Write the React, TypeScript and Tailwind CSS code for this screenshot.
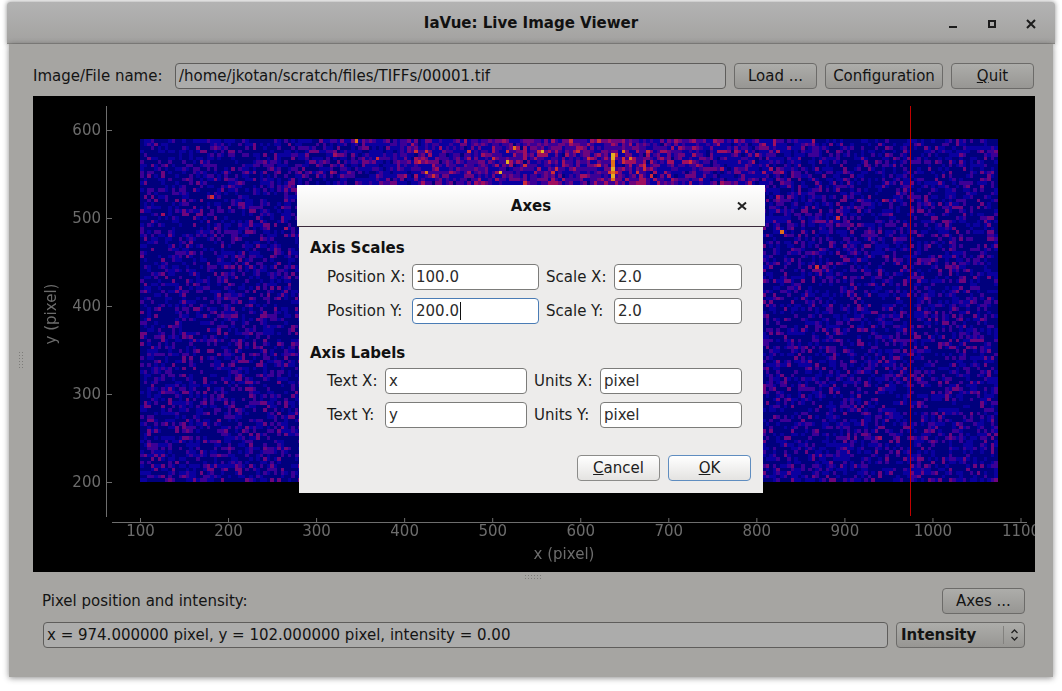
import { useEffect, useRef, type ReactNode } from 'react'

const PALETTE: [number, number, number][] = [
  [0, 0, 80],
  [0, 0, 125],
  [10, 0, 160],
  [60, 0, 150],
  [110, 5, 125],
  [160, 15, 95],
  [205, 45, 55],
  [225, 110, 25],
  [225, 175, 35],
]

const seeded = (seed: number) => () => {
  seed = (seed + 0x6d2b79f5) | 0
  let t = Math.imul(seed ^ (seed >>> 15), 1 | seed)
  t = (t + Math.imul(t ^ (t >>> 7), 61 | t)) ^ t
  return ((t ^ (t >>> 14)) >>> 0) / 4294967296
}

const Heatmap = () => {
  const ref = useRef<HTMLCanvasElement>(null)

  useEffect(() => {
    const ctx = ref.current?.getContext('2d')
    if (!ctx) return
    const rand = seeded(7)
    const cols = 244
    const rows = 98
    for (let y = 0; y < rows; y++) {
      for (let x = 0; x < cols; x++) {
        const bump = Math.exp(-(((x - 122) / 55) ** 2) - ((y / 32) ** 2))
        const r = rand()
        let v = 0.9 + 3.2 * r ** 2.6 + 2.4 * bump * (0.2 + rand())
        if (rand() < 0.003) v += 1.5
        if (rand() < 0.015 * bump) v += 2.5
        if (x === 134 && y >= 4 && y <= 11) v += 3.5 + rand() * 2
        const c = PALETTE[Math.max(0, Math.min(PALETTE.length - 1, Math.round(v)))]
        ctx.fillStyle = `rgb(${c[0]},${c[1]},${c[2]})`
        ctx.fillRect(x, y, 1, 1)
      }
    }
  }, [])

  return (
    <canvas
      ref={ref}
      width={244}
      height={98}
      className="absolute left-[107px] top-[43px] h-[343px] w-[858px] [image-rendering:pixelated]"
    />
  )
}

const PlotAxes = () => {
  const xTicks = [100, 200, 300, 400, 500, 600, 700, 800, 900, 1000, 1100]
  const yTicks = [600, 500, 400, 300, 200]
  const tx = (v: number) => 107.5 + (v - 100) * 0.8805
  const ty = (v: number) => 386 - (v - 200) * 0.88
  return (
    <svg
      viewBox="0 0 1002 476"
      className="absolute inset-0 h-full w-full font-['DejaVu_Sans',sans-serif] text-[15px]"
    >
      <line x1="73.5" y1="10" x2="73.5" y2="421" stroke="#6e6e6e" />
      <line x1="79" y1="426.5" x2="994" y2="426.5" stroke="#6e6e6e" />
      {yTicks.map((v) => (
        <g key={v}>
          <line x1="73" y1={ty(v) + 0.5} x2="79" y2={ty(v) + 0.5} stroke="#6e6e6e" />
          <text x="68" y={ty(v) + 4.5} textAnchor="end" fill="#6c6c6c">
            {v}
          </text>
        </g>
      ))}
      {xTicks.map((v) => (
        <g key={v}>
          <line x1={tx(v)} y1="422" x2={tx(v)} y2="427" stroke="#6e6e6e" />
          <text x={tx(v)} y="440" textAnchor="middle" fill="#6c6c6c">
            {v}
          </text>
        </g>
      ))}
      <text x="531" y="463" textAnchor="middle" fill="#6c6c6c">
        x (pixel)
      </text>
      <text
        transform="translate(23 218) rotate(-90)"
        textAnchor="middle"
        fill="#6c6c6c"
      >
        y (pixel)
      </text>
      <line x1="877.5" y1="10" x2="877.5" y2="420" stroke="#c00000" />
    </svg>
  )
}

const Grip = ({ vertical }: { vertical?: boolean }) => (
  <svg
    width={vertical ? 5 : 18}
    height={vertical ? 17 : 4}
    className="fill-[#7d7c79]"
  >
    {Array.from({ length: 6 }).flatMap((_, i) =>
      [0, 1].map((j) => (
        <rect
          key={`${i}-${j}`}
          x={vertical ? j * 3 : i * 3}
          y={vertical ? i * 3 : j * 3}
          width="1"
          height="1"
        />
      )),
    )}
  </svg>
)

const MainButton = ({ children, className }: { children: ReactNode; className: string }) => (
  <button className={`flex h-[26px] shrink-0 items-center justify-center rounded-[4px] border border-[#6c6b69] bg-gradient-to-b from-[#adadaa] to-[#979693] text-[#141414] ${className}`}>
    {children}
  </button>
)

const MainField = ({ children, className }: { children: ReactNode; className: string }) => (
  <div className={`flex h-[26px] items-center rounded-[4px] border border-[#5e5d5b] bg-[#acacab] pl-[3px] text-[#141414] ${className}`}>
    {children}
  </div>
)

const Field = ({ value, width, focused }: { value: string; width: string; focused?: boolean }) => (
  <div
    className={`flex h-[26px] shrink-0 items-center rounded-[4px] border bg-white pl-[3px] text-[#2b2b2b] ${width} ${
      focused ? 'border-[#4a7cb5]' : 'border-[#7c7c7a]'
    }`}
  >
    {value}
    {focused && <span className="ml-px h-[18px] w-px bg-[#111]" />}
  </div>
)

const FieldRow = ({
  labelA,
  labelB,
  a,
  b,
  wLabelA,
  wLabelB,
  wA,
  wB,
  focused,
}: {
  labelA: string
  labelB: string
  a: string
  b: string
  wLabelA: string
  wLabelB: string
  wA: string
  wB: string
  focused?: boolean
}) => (
  <div className="flex items-center gap-[7px]">
    <div className="flex items-center">
      <span className={`shrink-0 ${wLabelA}`}>{labelA}</span>
      <Field value={a} width={wA} focused={focused} />
    </div>
    <div className="flex items-center">
      <span className={`shrink-0 ${wLabelB}`}>{labelB}</span>
      <Field value={b} width={wB} />
    </div>
  </div>
)

const AxesDialog = () => (
  <div className="absolute left-[297px] top-[185px] w-[468px] text-[#1c1c1c]">
    <div className="relative flex h-[42px] items-center justify-center border-b border-[#3a2a3a] bg-gradient-to-b from-white to-[#ebeae8] pt-px font-bold text-[#111]">
      Axes
      <svg width="10" height="10" viewBox="0 0 10 10" className="absolute right-[18px] top-[16px] stroke-[#222] stroke-2">
        <path d="M1 1.5l8 7M9 1.5l-8 7" />
      </svg>
    </div>
    <div className="mx-[2px] flex h-[266px] flex-col bg-[#edeceb] pl-[11px] pt-[12px]">
      <h3 className="h-[18px] font-bold leading-[18px] text-[#111]">Axis Scales</h3>
      <div className="mt-[7px] flex flex-col gap-[8px] pl-[17px]">
        <FieldRow labelA="Position X:" labelB="Scale X:" a="100.0" b="2.0" wLabelA="w-[85px]" wLabelB="w-[68px]" wA="w-[127px]" wB="w-[128px]" />
        <FieldRow labelA="Position Y:" labelB="Scale Y:" a="200.0" b="2.0" wLabelA="w-[85px]" wLabelB="w-[68px]" wA="w-[127px]" wB="w-[128px]" focused />
      </div>
      <h3 className="mt-[20px] h-[18px] font-bold leading-[18px] text-[#111]">Axis Labels</h3>
      <div className="mt-[6px] flex flex-col gap-[8px] pl-[17px]">
        <FieldRow labelA="Text X:" labelB="Units X:" a="x" b="pixel" wLabelA="w-[58px]" wLabelB="w-[66px]" wA="w-[142px]" wB="w-[142px]" />
        <FieldRow labelA="Text Y:" labelB="Units Y:" a="y" b="pixel" wLabelA="w-[58px]" wLabelB="w-[66px]" wA="w-[142px]" wB="w-[142px]" />
      </div>
      <div className="mt-[27px] flex justify-end gap-[8px] pr-[12px]">
        <button className="h-[26px] w-[83px] rounded-[4px] border border-[#8b8b89] bg-gradient-to-b from-white to-[#e4e3e1]">
          <u>C</u>ancel
        </button>
        <button className="h-[26px] w-[83px] rounded-[4px] border border-[#5f8dc0] bg-gradient-to-b from-white to-[#e4e3e1]">
          <u>O</u>K
        </button>
      </div>
    </div>
  </div>
)

const App = () => (
  <div className="relative h-[691px] w-[1062px] overflow-hidden bg-white px-[7px] pt-[2px] font-['DejaVu_Sans',sans-serif] text-[15px]">
    <div className="flex h-[42px] items-center justify-center rounded-t-[3px] border-b border-[#8d8c89] bg-gradient-to-b from-[#b3b3b3] to-[#a3a2a0] pt-[2px] font-bold text-[#111] shadow-[0_0_5px_rgba(0,0,0,0.45)]">
      <span>IaVue: Live Image Viewer</span>
      <div className="absolute right-[26px] top-[19px] flex items-center gap-[29px]">
        <svg width="10" height="10" viewBox="0 0 10 10" className="fill-[#1c1c1c]">
          <rect x="1" y="7" width="8" height="2" />
        </svg>
        <svg width="10" height="10" viewBox="0 0 10 10" className="fill-none stroke-[#1c1c1c] stroke-2">
          <rect x="2" y="2" width="6" height="6" />
        </svg>
        <svg width="10" height="10" viewBox="0 0 10 10" className="stroke-[#1c1c1c] stroke-2">
          <path d="M1 1l8 8M9 1l-8 8" />
        </svg>
      </div>
    </div>
    <div className="relative mx-[2px] flex h-[633px] flex-col bg-[#a6a5a2] pl-[24px] pr-[18px] shadow-[0_1px_6px_rgba(0,0,0,0.45)]">
      <div className="mt-[19px] flex items-center gap-[8px] pr-[1px] text-[#141414]">
        <span className="w-[134px] shrink-0">Image/File name:</span>
        <MainField className="flex-1">/home/jkotan/scratch/files/TIFFs/00001.tif</MainField>
        <MainButton className="w-[83px]">Load ...</MainButton>
        <MainButton className="w-[118px]">Configuration</MainButton>
        <MainButton className="w-[83px]">
          <span>
            <u>Q</u>uit
          </span>
        </MainButton>
      </div>
      <div className="relative mt-[7px] h-[476px] overflow-hidden bg-black">
        <Heatmap />
        <PlotAxes />
      </div>
      <div className="mt-[3px] flex justify-center">
        <Grip />
      </div>
      <div className="mt-[9px] flex items-center justify-between pl-[9px] pr-[10px] text-[#141414]">
        <span>Pixel position and intensity:</span>
        <MainButton className="w-[83px]">Axes ...</MainButton>
      </div>
      <div className="mt-[8px] flex items-center gap-[8px] pl-[10px] pr-[10px]">
        <MainField className="flex-1">x = 974.000000 pixel, y = 102.000000 pixel, intensity = 0.00</MainField>
        <div className="flex h-[26px] w-[129px] shrink-0 items-center justify-between rounded-[4px] border border-[#6c6b69] bg-gradient-to-b from-[#adadaa] to-[#979693] pl-[4px] font-bold text-[#141414]">
          Intensity
          <div className="flex h-[18px] w-[21px] items-center justify-center border-l border-[#82817e]">
            <svg width="9" height="14" viewBox="0 0 9 14" className="fill-none stroke-[#222] stroke-[1.3]">
              <path d="M1.5 5L4.5 2l3 3M1.5 9l3 3 3-3" />
            </svg>
          </div>
        </div>
      </div>
      <div className="absolute left-[10px] top-[308px]">
        <Grip vertical />
      </div>
    </div>
    <AxesDialog />
  </div>
)

export default App
